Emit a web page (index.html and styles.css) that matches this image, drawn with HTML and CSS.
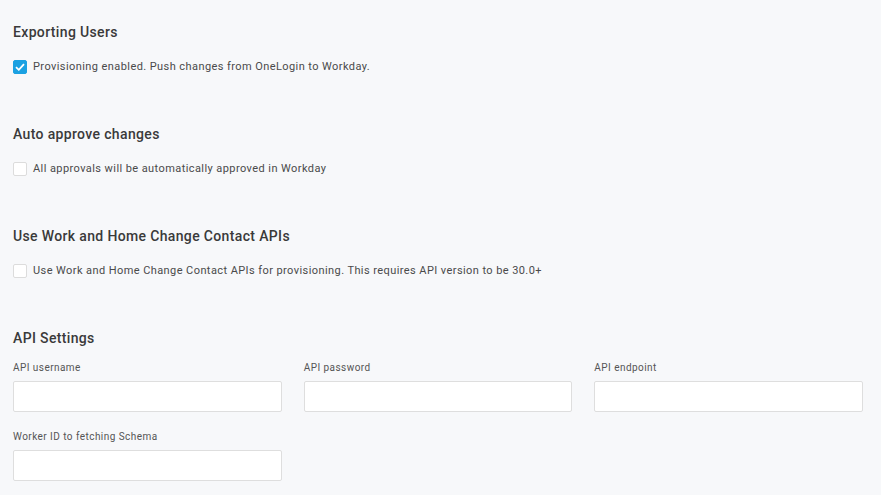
FILE: index.html
```html
<!DOCTYPE html>
<html lang="en">
<head>
    <meta charset="UTF-8">
    <title>Workday Provisioning</title>
    <link rel="stylesheet" href="styles.css">
</head>
<body>
    <div class="page">
        <div class="section">
            <h2>Exporting Users</h2>
            <label class="check">
                <span class="box checked">
                    <svg width="10" height="8" viewBox="0 0 10 8"><path d="M1 4.2 L3.8 6.8 L9 1.2" fill="none" stroke="#fff" stroke-width="1.8"/></svg>
                </span>
                Provisioning enabled. Push changes from OneLogin to Workday.
            </label>
        </div>
        <div class="section">
            <h2>Auto approve changes</h2>
            <label class="check">
                <span class="box"></span>
                All approvals will be automatically approved in Workday
            </label>
        </div>
        <div class="section">
            <h2>Use Work and Home Change Contact APIs</h2>
            <label class="check">
                <span class="box"></span>
                Use Work and Home Change Contact APIs for provisioning. This requires API version to be 30.0+
            </label>
        </div>
        <div class="section api">
            <h2>API Settings</h2>
            <div class="fields">
                <div class="field">
                    <label for="api-user">API username</label>
                    <input type="text" id="api-user">
                </div>
                <div class="field">
                    <label for="api-pass">API password</label>
                    <input type="password" id="api-pass">
                </div>
                <div class="field">
                    <label for="api-endpoint">API endpoint</label>
                    <input type="text" id="api-endpoint">
                </div>
                <div class="field">
                    <label for="worker-id">Worker ID to fetching Schema</label>
                    <input type="text" id="worker-id">
                </div>
            </div>
        </div>
    </div>
</body>
</html>
```

FILE: styles.css
```css
body {
    margin: 0;
    padding: 0;
    background-color: #f7f8fa;
    font-family: Roboto, "Liberation Sans", sans-serif;
    color: #333;
}

.page {
    padding: 21.5px 18px 0 13px;
}

.section {
    height: 102px;
}

.section h2 {
    margin: 0 0 18px 0;
    font-size: 14px;
    font-weight: 500;
    line-height: 20px;
    color: #3a3a3a;
    letter-spacing: 0.35px;
}

.check {
    display: flex;
    align-items: center;
    gap: 6px;
    font-size: 11px;
    line-height: 14px;
    color: #4a4a4a;
    letter-spacing: 0.42px;
}

.box {
    width: 12px;
    height: 12px;
    border: 1px solid #dcdcdc;
    border-radius: 2px;
    background-color: #fff;
    display: flex;
    align-items: center;
    justify-content: center;
    flex-shrink: 0;
}

.box.checked {
    background-color: #1ba1e2;
    border-color: #1ba1e2;
}

.api {
    height: auto;
}

.api h2 {
    margin-bottom: 13px;
}

.fields {
    display: grid;
    grid-template-columns: 1fr 1fr 1fr;
    column-gap: 22px;
    row-gap: 18px;
}

.field label {
    display: block;
    font-size: 10px;
    line-height: 14px;
    color: #555;
    margin-bottom: 6px;
    letter-spacing: 0.45px;
}

.field input {
    display: block;
    width: 100%;
    height: 31px;
    box-sizing: border-box;
    border: 1px solid #dedede;
    border-radius: 2px;
    background-color: #fff;
    outline: none;
}
```
